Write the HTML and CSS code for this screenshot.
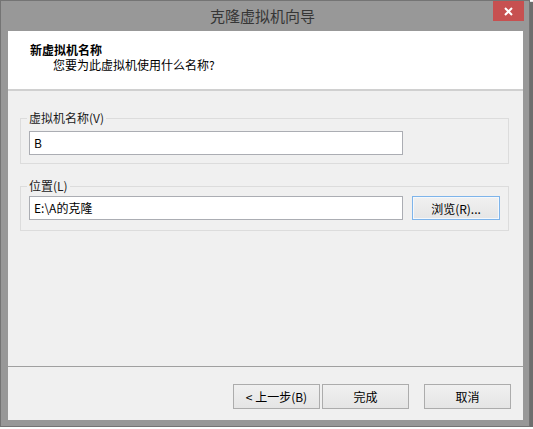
FILE: index.html
```html
<!DOCTYPE html>
<html lang="zh-CN">
<head>
<meta charset="utf-8">
<title>克隆虚拟机向导</title>
<link rel="stylesheet" href="styles.css">
</head>
<body>
<div class="window">
  <div class="titlebar">
    <span class="tb-spacer"></span>
    <span class="title">克隆虚拟机向导</span>
    <span class="close"><svg width="9" height="9" viewBox="0 0 9 9"><path d="M1 1 L8 8 M8 1 L1 8" stroke="#fff" stroke-width="2" fill="none"/></svg></span>
  </div>
  <div class="client">
    <div class="header">
      <div class="h-title">新虚拟机名称</div>
      <div class="h-sub">您要为此虚拟机使用什么名称?</div>
    </div>
    <div class="content">
      <fieldset class="group group-name">
        <legend>虚拟机名称(V)</legend>
        <div class="field">B</div>
      </fieldset>
      <fieldset class="group group-loc">
        <legend>位置(L)</legend>
        <div class="row">
          <div class="field">E:\A的克隆</div>
          <button class="btn btn-browse">浏览(R)...</button>
        </div>
      </fieldset>
    </div>
    <div class="footer">
      <button class="btn">&lt; 上一步(B)</button>
      <button class="btn">完成</button>
      <button class="btn btn-cancel">取消</button>
    </div>
  </div>
</div>
</body>
</html>
```
FILE: styles.css
```css
html, body {
  margin: 0;
  padding: 0;
  background: #ffffff;
}
body {
  font-family: "Noto Sans CJK SC", "Noto Sans", sans-serif;
  font-size: 12px;
  color: #000;
}
.window {
  box-sizing: border-box;
  width: 530px;
  height: 427px;
  background: #989898;
  border: 1px solid #747474;
  box-shadow: 3px 2px 1px #6e6e6e;
  display: flex;
  flex-direction: column;
}
.titlebar {
  height: 30px;
  display: grid;
  grid-template-columns: 1fr auto 1fr;
  align-items: start;
  padding-right: 5px;
}
.title {
  font-size: 15px;
  line-height: 30px;
  color: #363636;
}
.close {
  justify-self: end;
  width: 31px;
  height: 20px;
  background: #c75050;
  display: flex;
  align-items: center;
  justify-content: center;
}
.client {
  flex: 1;
  margin: 0 6px 6px 7px;
  background: #f0f0f0;
  display: flex;
  flex-direction: column;
}
.header {
  box-sizing: border-box;
  height: 60px;
  background: #ffffff;
  border-bottom: 2px solid #d0d0d0;
  padding: 11px 0 0 22px;
  line-height: 15px;
}
.h-title {
  font-weight: bold;
}
.h-sub {
  margin-left: 23px;
}
.content {
  padding: 0 14px 0 12px;
}
.group {
  margin: 0;
  border: 1px solid #dcdcdc;
  padding: 6px 8px 8px 8px;
}
.group legend {
  padding: 0 2px;
  margin-left: -2px;
  line-height: 14px;
  color: #1a1a1a;
}
.group-name {
  margin-top: 20px;
}
.group-loc {
  margin-top: 15px;
  padding-top: 3px;
  padding-bottom: 10px;
}
.field {
  box-sizing: border-box;
  width: 374px;
  height: 24px;
  background: #fff;
  border: 1px solid #abadb3;
  padding-left: 4px;
  line-height: 22px;
}
.row {
  display: flex;
  align-items: center;
  gap: 9px;
}
.btn {
  box-sizing: border-box;
  width: 87px;
  height: 25px;
  padding: 0;
  margin: 0;
  font-family: inherit;
  font-size: 12px;
  color: #000;
  border: 1px solid #acacac;
  background: linear-gradient(#f0f0f0, #e5e5e5);
}
.btn-browse {
  width: 88px;
  height: 24px;
  border-color: #7eb4ea;
  box-shadow: inset 0 0 0 1px #f4f8fc;
}
.footer {
  margin-top: auto;
  border-top: 1px solid #a0a0a0;
  padding: 17px 12px 11px 0;
  display: flex;
  justify-content: flex-end;
  gap: 2px;
}
.btn-cancel {
  margin-left: 13px;
}
```
